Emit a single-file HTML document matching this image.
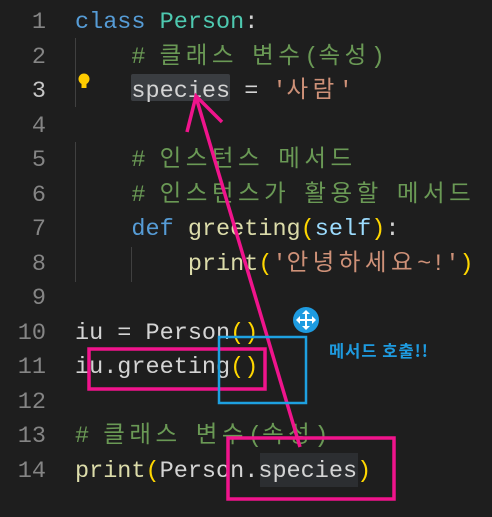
<!DOCTYPE html>
<html><head><meta charset="utf-8"><style>
body{margin:0;background:#1e1e1e;width:492px;height:517px;overflow:hidden;position:relative;font-family:"Liberation Mono","Noto Sans CJK KR",monospace;font-size:23.5px}
.ln{position:absolute;left:0;width:46px;text-align:right;color:#858585;height:34px;line-height:34px;margin-top:2px}
.c{position:absolute;left:75px;white-space:pre;height:34px;line-height:34px;color:#d4d4d4;margin-top:2px}
.k{font-family:"Noto Sans CJK KR",sans-serif;letter-spacing:4.5px;line-height:0}
.kw{color:#569cd6}.cl{color:#4ec9b0}.cm{color:#6a9955}.st{color:#ce9178}.fn{color:#dcdcaa}.sf{color:#9cdcfe}.p{color:#ffd700}
.g{position:absolute;width:1px;background:#404040}
</style></head><body>
<div class="g" style="left:75px;top:38px;height:69px"></div>
<div class="g" style="left:75px;top:142px;height:140px"></div>
<div class="g" style="left:131px;top:247px;height:35px"></div>
<div style="position:absolute;left:131px;top:74px;width:99px;height:27px;background:#3a3d41;border-radius:2px"></div>
<div style="position:absolute;left:260px;top:453px;width:98px;height:34px;background:#2c2e31"></div>
<svg style="position:absolute;left:77px;top:72px" width="14" height="18"><circle cx="7" cy="7" r="5.5" fill="#ffcc00"/><rect x="4.5" y="11" width="5" height="5" fill="#ffcc00"/></svg>

<div class="ln" style="top:4px">1</div><div class="c" style="top:4px"><span class="kw">class</span> <span class="cl">Person</span>:</div>
<div class="ln" style="top:38.5px">2</div><div class="c cm" style="top:38.5px">    # <span class="k">클래스</span> <span class="k">변수</span>(<span class="k">속성</span>)</div>
<div class="ln" style="top:73px;color:#c6c6c6">3</div><div class="c" style="top:73px">    species = <span class="st">'<span class="k">사람</span>'</span></div>
<div class="ln" style="top:107.5px">4</div>
<div class="ln" style="top:142px">5</div><div class="c cm" style="top:142px">    # <span class="k">인스턴스</span> <span class="k">메서드</span></div>
<div class="ln" style="top:176.5px">6</div><div class="c cm" style="top:176.5px">    # <span class="k">인스턴스가</span> <span class="k">활용할</span> <span class="k">메서드</span></div>
<div class="ln" style="top:211px">7</div><div class="c" style="top:211px">    <span class="kw">def</span> <span class="fn">greeting</span><span class="p">(</span><span class="sf">self</span><span class="p">)</span>:</div>
<div class="ln" style="top:245.5px">8</div><div class="c" style="top:245.5px">        <span class="fn">print</span><span class="p">(</span><span class="st">'<span class="k">안녕하세요</span>~!'</span><span class="p">)</span></div>
<div class="ln" style="top:280px">9</div>
<div class="ln" style="top:314.5px">10</div><div class="c" style="top:314.5px">iu = Person<span class="p">()</span></div>
<div class="ln" style="top:349px">11</div><div class="c" style="top:349px">iu.greeting<span class="p">()</span></div>
<div class="ln" style="top:383.5px">12</div>
<div class="ln" style="top:418px">13</div><div class="c cm" style="top:418px"># <span class="k">클래스</span> <span class="k">변수</span>(<span class="k">속성</span>)</div>
<div class="ln" style="top:452.5px">14</div><div class="c" style="top:452.5px"><span class="fn">print</span><span class="p">(</span>Person.species<span class="p">)</span></div>

<svg style="position:absolute;left:0;top:0" width="492" height="517">
<g fill="none" stroke="#f0148c" stroke-width="3.5">
<rect x="89" y="349" width="176" height="40"/>
<rect x="228" y="438" width="166" height="61"/>
<line x1="300" y1="447" x2="196" y2="97"/>
<polyline points="187,132 196,96 222,122"/>
</g>
<rect x="219" y="337" width="87" height="66" fill="none" stroke="#1ea0e0" stroke-width="2.5"/>
<circle cx="306" cy="320" r="13" fill="#1e9be0"/>
<g stroke="#fff" stroke-width="2"><line x1="298" y1="320" x2="314" y2="320"/><line x1="306" y1="312" x2="306" y2="328"/></g>
<g fill="#fff"><polygon points="306,310 302,314 310,314"/><polygon points="306,330 302,326 310,326"/><polygon points="296,320 300,316 300,324"/><polygon points="316,320 312,316 312,324"/></g>
</svg>
<div style="position:absolute;left:329px;top:339px;color:#1e9be0;font-weight:bold;font-size:16.5px;letter-spacing:1px;font-family:'Noto Sans CJK KR',sans-serif;line-height:22px">메서드 호출!!</div>
</body></html>
